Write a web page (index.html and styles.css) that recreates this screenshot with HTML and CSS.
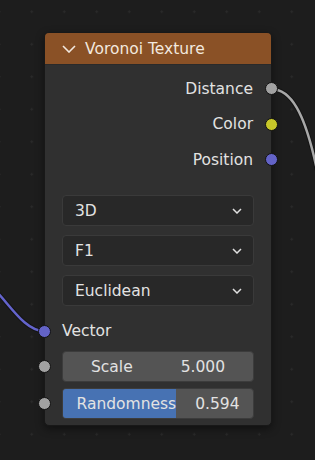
FILE: index.html
```html
<!DOCTYPE html>
<html lang="en">
<head>
  <meta charset="UTF-8">
  <title>Voronoi Texture</title>
  <link rel="stylesheet" href="styles.css">
</head>
<body>

<div class="canvas">
  <svg class="wires" width="315" height="460" viewBox="0 0 315 460">
    <path class="wire-shadow" d="M271 89 C 290 89, 305 110, 318 175"/>
    <path class="wire grey" d="M271 89 C 290 89, 305 110, 318 175"/>
    <path class="wire-shadow" d="M-5 290 C 10 305, 25 331, 44 331"/>
    <path class="wire purple" d="M-5 290 C 10 305, 25 331, 44 331"/>
  </svg>

  <div class="node">
    <div class="node-header">
      <svg class="collapse" width="14" height="8" viewBox="0 0 14 8">
        <path d="M1 1 L7 7 L13 1"/>
      </svg>
      <span>Voronoi Texture</span>
    </div>

    <div class="node-body">
      <div class="row out"><span>Distance</span><i class="socket grey"></i></div>
      <div class="row out"><span>Color</span><i class="socket yellow"></i></div>
      <div class="row out"><span>Position</span><i class="socket purple"></i></div>

      <div class="selects">
        <div class="select"><span>3D</span>
          <svg width="10" height="6" viewBox="0 0 10 6"><path d="M1 1 L5 5 L9 1"/></svg>
        </div>
        <div class="select"><span>F1</span>
          <svg width="10" height="6" viewBox="0 0 10 6"><path d="M1 1 L5 5 L9 1"/></svg>
        </div>
        <div class="select"><span>Euclidean</span>
          <svg width="10" height="6" viewBox="0 0 10 6"><path d="M1 1 L5 5 L9 1"/></svg>
        </div>
      </div>

      <div class="row in"><i class="socket purple"></i><span>Vector</span></div>

      <div class="input scale">
        <i class="socket grey"></i>
        <div class="field"><span>Scale</span><span>5.000</span></div>
      </div>
      <div class="input random">
        <i class="socket grey"></i>
        <div class="field slider">
          <div class="fill" style="width: 59.4%;"></div>
          <span>Randomness</span><span>0.594</span>
        </div>
      </div>
    </div>
  </div>
</div>

</body>
</html>
```

FILE: styles.css
```css
html, body {
  margin: 0;
  padding: 0;
  height: 100%;
  background-color: #1d1d1d;
  font-family: "DejaVu Sans", sans-serif;
  font-size: 15.5px;
  color: #e2e2e2;
}

.canvas {
  position: relative;
  width: 315px;
  height: 460px;
  overflow: hidden;
  padding: 32px 0 0 44px;
  box-sizing: border-box;
  background-image: radial-gradient(circle, #2a2a2a 1px, transparent 1.3px);
  background-size: 32.5px 32.5px;
  background-position: 15.5px -4.5px;
}

.wires {
  position: absolute;
  left: 0;
  top: 0;
}

.wire-shadow {
  fill: none;
  stroke: #141414;
  stroke-width: 4.5;
}

.wire {
  fill: none;
  stroke-width: 2.5;
}

.wire.grey { stroke: #a8a8a8; }
.wire.purple { stroke: #6464cc; }

.node {
  position: relative;
  width: 228px;
  box-sizing: border-box;
  background-color: #303030;
  border: 1px solid #181818;
  border-radius: 5px;
  box-shadow: 0 3px 8px rgba(0, 0, 0, 0.45);
}

.node-header {
  height: 32px;
  display: flex;
  align-items: center;
  gap: 9px;
  padding-left: 17px;
  background-color: #8a5126;
  border-radius: 4px 4px 0 0;
  border-bottom: 1px solid #2a2a2a;
  box-sizing: border-box;
  color: #f2e8df;
}

.collapse path {
  fill: none;
  stroke: #f2e8df;
  stroke-width: 1.6;
}

.node-body {
  padding: 6px 0 6px 0;
}

.row {
  position: relative;
  height: 35.5px;
  display: flex;
  align-items: center;
}

.row.out {
  justify-content: flex-end;
  padding-right: 18px;
}

.row.in {
  height: 36px;
  margin-top: 7px;
  padding-left: 17px;
}

.socket {
  position: absolute;
  width: 11px;
  height: 11px;
  border-radius: 50%;
  border: 1px solid #111;
  top: 50%;
  margin-top: -6.5px;
}

.row.out .socket { right: -7px; }
.row.in .socket { left: -7px; }
.input .socket { left: -24px; }

.socket.grey { background-color: #a1a1a1; }
.socket.yellow { background-color: #c7c729; }
.socket.purple { background-color: #6363c7; }

.selects {
  display: flex;
  flex-direction: column;
  gap: 9px;
  margin: 17.5px 17px 0 17px;
}

.select {
  height: 31px;
  display: flex;
  align-items: center;
  justify-content: space-between;
  padding: 0 11px 0 12px;
  background-color: #282828;
  border: 1px solid #3a3a3a;
  border-radius: 4px;
  box-sizing: border-box;
}

.select path {
  fill: none;
  stroke: #e0e0e0;
  stroke-width: 1.5;
}

.input {
  position: relative;
  margin: 6px 17px 0 17px;
}

.input.scale { margin-top: 2px; }

.field {
  position: relative;
  height: 31px;
  display: flex;
  align-items: center;
  justify-content: space-around;
  padding: 0 4px;
  background-color: #545454;
  border: 1px solid #3c3c3c;
  border-radius: 4px;
  box-sizing: border-box;
  overflow: hidden;
}

.field span {
  position: relative;
}

.fill {
  position: absolute;
  left: 0;
  top: 0;
  bottom: 0;
  background-color: #4772b3;
}
```
